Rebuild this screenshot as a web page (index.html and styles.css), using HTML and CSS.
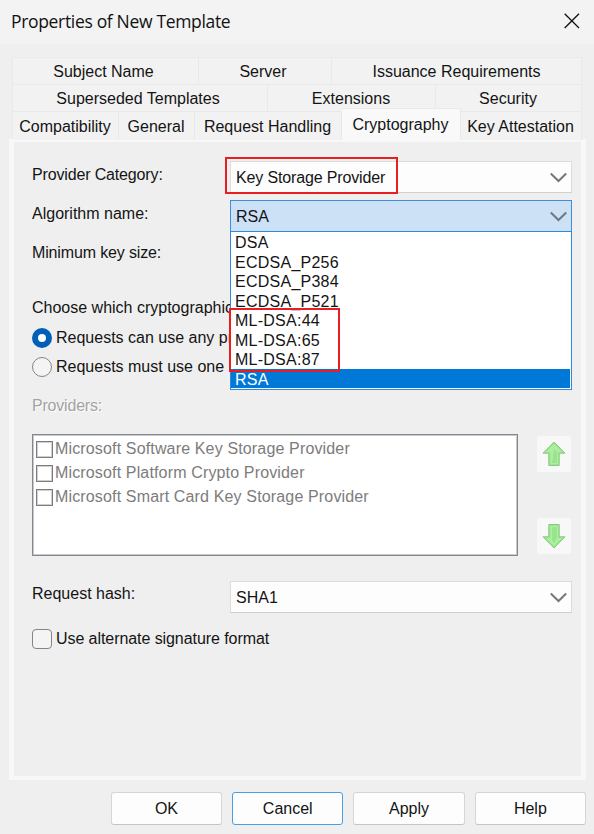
FILE: index.html
```html
<!DOCTYPE html>
<html lang="en">
<head>
    <meta charset="UTF-8">
    <meta name="viewport" content="width=device-width, initial-scale=1.0">
    <title>Properties of New Template</title>
    <link rel="stylesheet" href="styles.css">
</head>
<body>
    <div class="dialog">
        <header class="titlebar">
            <h1>Properties of New Template</h1>
            <svg class="close" width="16" height="16" viewBox="0 0 16 16"><path d="M.7.7 15 15M15 .7.7 15" fill="none" stroke="#111" stroke-width="1.3"/></svg>
        </header>

        <nav class="tabs">
            <div class="tab-row row-1">
                <div class="tab">Subject Name</div>
                <div class="tab">Server</div>
                <div class="tab">Issuance Requirements</div>
            </div>
            <div class="tab-row row-2">
                <div class="tab">Superseded Templates</div>
                <div class="tab">Extensions</div>
                <div class="tab">Security</div>
            </div>
            <div class="tab-row row-3">
                <div class="tab">Compatibility</div>
                <div class="tab">General</div>
                <div class="tab">Request Handling</div>
                <div class="tab active">Cryptography</div>
                <div class="tab">Key Attestation</div>
            </div>
        </nav>

        <main class="panel">
            <div class="field">
                <label class="tight">Provider Category:</label>
                <div class="combo">
                    <span class="tight">Key Storage Provider</span>
                    <svg class="chevron" width="17" height="11" viewBox="0 0 17 11"><path d="M.8 1.5 8.5 9 16.2 1.5" fill="none" stroke="#777" stroke-width="2"/></svg>
                    <div class="mark mark-provider"></div>
                </div>
            </div>
            <div class="field">
                <label>Algorithm name:</label>
                <div class="combo open">
                    <span>RSA</span>
                    <svg class="chevron" width="17" height="11" viewBox="0 0 17 11"><path d="M.8 1.5 8.5 9 16.2 1.5" fill="none" stroke="#6f7880" stroke-width="2"/></svg>
                    <ul class="dropdown">
                        <li>DSA</li>
                        <li>ECDSA_P256</li>
                        <li>ECDSA_P384</li>
                        <li>ECDSA_P521</li>
                        <li>ML-DSA:44</li>
                        <li>ML-DSA:65</li>
                        <li>ML-DSA:87</li>
                        <li class="selected">RSA</li>
                    </ul>
                    <div class="mark mark-mldsa"></div>
                </div>
            </div>
            <div class="field">
                <label class="tight">Minimum key size:</label>
            </div>

            <p class="choose">Choose which cryptographic</p>
            <div class="option"><span class="radio checked"></span>Requests can use any pr</div>
            <div class="option"><span class="radio"></span>Requests must use one</div>

            <p class="providers-label">Providers:</p>
            <div class="providers">
                <ul class="listbox">
                    <li><span class="box"></span>Microsoft Software Key Storage Provider</li>
                    <li><span class="box"></span>Microsoft Platform Crypto Provider</li>
                    <li><span class="box"></span>Microsoft Smart Card Key Storage Provider</li>
                </ul>
                <div class="order">
                    <div class="arrow-btn">
                        <svg width="24" height="26" viewBox="0 0 24 26"><path d="M12 1 23 12.2H17.2V24.5H6.8V12.2H1Z" fill="#9be58e" stroke="#8acb83" stroke-width="1"/><path d="M12 3 19.8 11H16V23H8.5V11H4.2Z" fill="#aeeea2"/><path d="M12 8 15 11V22H10Z" fill="#98e58c"/></svg>
                    </div>
                    <div class="arrow-btn">
                        <svg width="24" height="26" viewBox="0 0 24 26"><path d="M12 25 23 13.8H17.2V1.5H6.8V13.8H1Z" fill="#9be58e" stroke="#8acb83" stroke-width="1"/><path d="M12 23 19.8 15H16V3H8.5V15H4.2Z" fill="#aeeea2"/><path d="M12 20 15 15V4H10V17Z" fill="#98e58c"/></svg>
                    </div>
                </div>
            </div>

            <div class="field hash">
                <label>Request hash:</label>
                <div class="combo">
                    <span>SHA1</span>
                    <svg class="chevron" width="17" height="11" viewBox="0 0 17 11"><path d="M.8 1.5 8.5 9 16.2 1.5" fill="none" stroke="#777" stroke-width="2"/></svg>
                </div>
            </div>
            <div class="option alternate"><span class="checkbox"></span>Use alternate signature format</div>
        </main>

        <footer class="buttons">
            <button class="btn">OK</button>
            <button class="btn btn-default">Cancel</button>
            <button class="btn">Apply</button>
            <button class="btn">Help</button>
        </footer>
    </div>
</body>
</html>
```

FILE: styles.css
```css
* { box-sizing: border-box; margin: 0; padding: 0; }
body {
    font-family: "Liberation Sans", Arial, sans-serif;
    font-size: 16px;
    line-height: 20px;
    color: #141414;
    background: #efefef;
}
ul { list-style: none; }
.dialog {
    width: 594px;
    height: 834px;
    overflow: hidden;
}
.titlebar {
    display: flex;
    justify-content: space-between;
    align-items: center;
    height: 44px;
    padding: 0 14px 3px 11px;
    background: #f3f3f3;
}
.titlebar h1 {
    font-family: "Open Sans", "Noto Sans", sans-serif;
    font-size: 17.5px;
    font-weight: 400;
    letter-spacing: -0.33px;
    color: #111;
}

/* tabs */
.tabs {
    margin: 13px 12px 0;
}
.tab-row {
    display: grid;
    height: 27px;
    border-left: 1px solid #e9e9e9;
}
.row-1 { grid-template-columns: 186px 133px 1fr; }
.row-2 { grid-template-columns: 255px 168px 1fr; }
.row-3 { grid-template-columns: 106px 76px 147px 119px 1fr; height: 28px; }
.tab {
    display: flex;
    align-items: center;
    justify-content: center;
    padding-top: 2px;
    white-space: nowrap;
    background: #f2f2f2;
    border-top: 1px solid #e9e9e9;
    border-right: 1px solid #e9e9e9;
}
.row-1 .tab { padding-right: 4px; }
.row-1 .tab:last-child { padding-right: 0; }
.row-2 .tab:first-child { padding-right: 4px; }
.row-2 .tab { padding-right: 1px; }
.row-3 .tab {
    padding-top: 1px;
    padding-right: 1px;
}
.row-3 .tab.active {
    height: 32px;
    margin-top: -3px;
    padding-top: 0;
    background: #f9f9f9;
    z-index: 1;
}

/* page */
.panel {
    width: 577px;
    height: 641px;
    margin-left: 9px;
    padding: 19px 9px 0 18px;
    border: solid #f8f8f8;
    border-width: 3px 5px 4px;
}
.field {
    display: grid;
    grid-template-columns: 198px 342px;
    height: 31px;
    margin-bottom: 8px;
}
.field label {
    padding-top: 4px;
}
.field.hash label {
    padding-top: 3px;
}
.tight { letter-spacing: -0.15px; }
.combo {
    position: relative;
    display: flex;
    align-items: center;
    justify-content: space-between;
    height: 32px;
    padding: 1px 4px 0 5px;
    background: #fdfdfd;
    border: 1px solid #dcdcdc;
    border-bottom-color: #cfcfcf;
}
.combo.open {
    background: #cce0f6;
    border-color: #3c8fd8;
}
.dropdown {
    position: absolute;
    top: 30px;
    left: -1px;
    width: 342px;
    height: 159px;
    padding-right: 1px;
    background: #fff;
    border: 1px solid #2d8ad8;
    z-index: 2;
}
.dropdown li {
    height: 19.5px;
    padding-left: 4px;
    line-height: 21px;
    letter-spacing: 0.25px;
}
.dropdown .selected {
    color: #fff;
    background: #0078d7;
}
.mark {
    position: absolute;
    border: 2px solid #e81e20;
    z-index: 3;
}
.mark-provider {
    top: -5px;
    left: -6px;
    width: 173px;
    height: 37px;
}
.mark-mldsa {
    top: 107px;
    left: -2px;
    width: 111px;
    height: 64px;
}
.choose {
    margin-top: 28px;
    margin-bottom: 10px;
}
.option {
    display: flex;
    align-items: center;
    height: 20px;
    margin-bottom: 9px;
    white-space: nowrap;
}
.radio,
.checkbox {
    width: 20px;
    height: 20px;
    margin-right: 4px;
    background: #f4f4f4;
    border: 1px solid #858585;
    border-radius: 50%;
}
.radio.checked {
    background: #fff;
    border: 6px solid #005fb8;
}
.checkbox {
    border-radius: 4px;
}
.providers-label {
    margin-top: 19px;
    color: #a3a3a3;
    letter-spacing: -0.2px;
    text-shadow: 1px 1px 0 #fff;
}
.providers {
    display: flex;
    gap: 19px;
    margin-top: 18px;
    margin-bottom: 25px;
}
.listbox {
    width: 486px;
    height: 122px;
    padding: 3px 2px;
    background: #fff;
    border: 1px solid #828790;
    box-shadow: inset 0 0 0 1px #c8cacd;
    color: #7c7c7c;
    letter-spacing: 0.15px;
}
.listbox li {
    display: flex;
    height: 24px;
    padding: 1px 0 0 1px;
}
.box {
    width: 17px;
    height: 17px;
    margin: 2px 2px 0 0;
    border: 1px solid #7c7c7c;
    box-shadow: inset 0 0 0 1px #cfcfcf;
}
.order {
    display: flex;
    flex-direction: column;
    justify-content: space-between;
    padding: 2px 0 2px;
}
.arrow-btn {
    display: flex;
    align-items: center;
    justify-content: center;
    width: 34px;
    height: 36px;
    background: #f8f8f8;
    border-radius: 3px;
}
.alternate {
    margin-top: 17px;
    letter-spacing: -0.07px;
}

/* dialog buttons */
.buttons {
    display: flex;
    justify-content: flex-end;
    gap: 10px;
    padding: 12px 8px 0 0;
}
.btn {
    width: 111.3px;
    height: 33px;
    font: inherit;
    color: #141414;
    background: #fdfdfd;
    border: 1px solid #d6d6d6;
    border-bottom-color: #c4c4c4;
    border-radius: 3px;
}
.btn-default {
    border-color: #4a9fe3;
}
```
